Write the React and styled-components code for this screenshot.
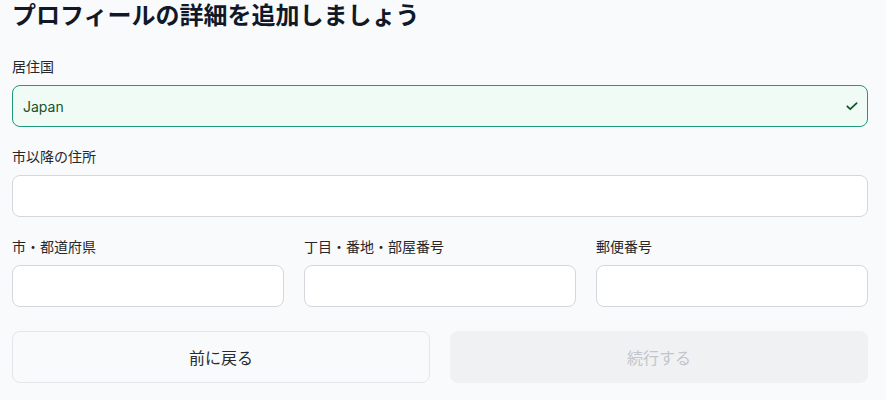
import React from "react";
import styled, { createGlobalStyle } from "styled-components";

const Global = createGlobalStyle`
  html, body { margin: 0; padding: 0; background: #f8fafc; }
  body { font-family: Inter, "Noto Sans CJK JP", sans-serif; color: #1f2937; }
  * { box-sizing: border-box; }
`;

const Page = styled.div`
  padding: 0 12px 0 12px;
  width: 880px;
`;

const Title = styled.h1`
  margin: 0;
  font-size: 24px;
  line-height: 32px;
  font-weight: 700;
  color: #111827;
`;

const Form = styled.div`
  display: flex;
  flex-direction: column;
  gap: 20px;
  margin-top: 25px;
  width: 856px;
`;

const Field = styled.label`
  display: flex;
  flex-direction: column;
  gap: 8px;
  min-width: 0;
`;

const Label = styled.span`
  font-size: 14px;
  line-height: 20px;
  color: #27272a;
`;

const InputWrap = styled.div`
  position: relative;
  height: 42px;
  border-radius: 8px;
  border: 1px solid ${(p) => (p.$valid ? "#1f9a77" : "#d4d6db")};
  background: ${(p) => (p.$valid ? "#f1fbf6" : "#ffffff")};
  display: flex;
  align-items: center;
  padding: 0 10px;
`;

const Input = styled.input`
  border: none;
  outline: none;
  background: transparent;
  flex: 1;
  font-family: inherit;
  font-size: 14px;
  color: #14532d;
  padding: 0;
`;

const Check = styled.svg`
  width: 14px;
  height: 14px;
  flex: none;
  margin-right: -2px;
`;

const Row = styled.div`
  display: grid;
  grid-template-columns: repeat(3, 1fr);
  gap: 20px;
`;

const Buttons = styled.div`
  display: grid;
  grid-template-columns: 1fr 1fr;
  gap: 20px;
  margin-top: 4px;
`;

const Button = styled.button`
  height: 52px;
  border-radius: 8px;
  font-family: inherit;
  font-size: 16px;
  border: 1px solid ${(p) => (p.disabled ? "#f0f1f3" : "#e4e6ea")};
  background: ${(p) => (p.disabled ? "#f0f1f3" : "#f8fafc")};
  color: ${(p) => (p.disabled ? "#c3c5ca" : "#2b2b2f")};
`;

function TextField({ label, value, valid }) {
  return (
    <Field>
      <Label>{label}</Label>
      <InputWrap $valid={valid}>
        <Input defaultValue={value} />
        {valid && (
          <Check viewBox="0 0 24 24" fill="none" stroke="#14532d" strokeWidth="3" strokeLinecap="round" strokeLinejoin="round">
            <path d="M4 12.5l5 5L20 7" />
          </Check>
        )}
      </InputWrap>
    </Field>
  );
}

export default function App() {
  return (
    <>
      <Global />
      <Page>
        <Title>プロフィールの詳細を追加しましょう</Title>
        <Form>
          <TextField label="居住国" value="Japan" valid />
          <TextField label="市以降の住所" />
          <Row>
            <TextField label="市・都道府県" />
            <TextField label="丁目・番地・部屋番号" />
            <TextField label="郵便番号" />
          </Row>
          <Buttons>
            <Button>前に戻る</Button>
            <Button disabled>続行する</Button>
          </Buttons>
        </Form>
      </Page>
    </>
  );
}
